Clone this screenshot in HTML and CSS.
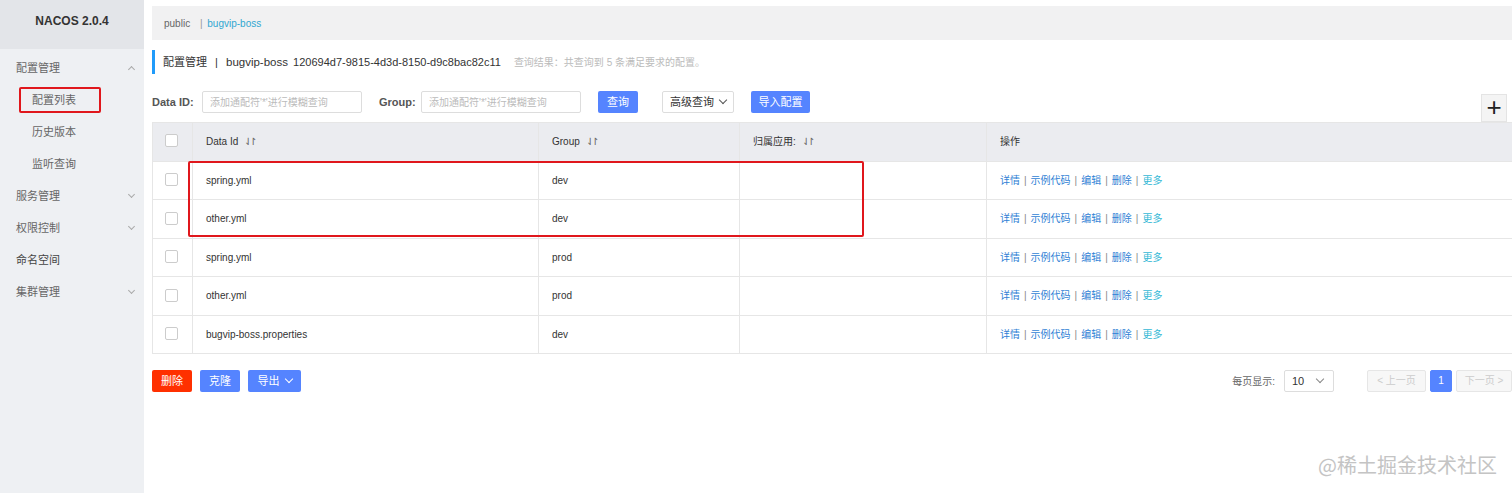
FILE: index.html
```html
<!DOCTYPE html>
<html>
<head lang="zh">
    <meta charset="UTF-8">
    <title>Nacos</title>
    <link rel="stylesheet" href="styles.css">
</head>
<body>
<div class="app">
    <div class="side">
        <div class="logo">NACOS 2.0.4</div>
        <ul class="menu">
            <li class="grp">配置管理<span class="arr up"></span></li>
            <li class="sub"><span class="mark">配置列表</span></li>
            <li class="sub">历史版本</li>
            <li class="sub">监听查询</li>
            <li class="grp">服务管理<span class="arr"></span></li>
            <li class="grp">权限控制<span class="arr"></span></li>
            <li class="grp dark">命名空间</li>
            <li class="grp">集群管理<span class="arr"></span></li>
        </ul>
    </div>
    <div class="main">
        <div class="ns">
            <span class="ns-item">public</span>
            <span class="ns-sep">|</span>
            <span class="ns-cur">bugvip-boss</span>
        </div>
        <div class="title">
            <span class="t-main">配置管理</span>
            <span class="t-sep">|</span>
            <span class="t-ns">bugvip-boss</span>
            <span class="t-id">120694d7-9815-4d3d-8150-d9c8bac82c11</span>
            <span class="t-res">查询结果：共查询到 5 条满足要求的配置。</span>
        </div>
        <div class="search">
            <label>Data ID:</label>
            <input class="ipt" placeholder="添加通配符'*'进行模糊查询">
            <label class="lb2">Group:</label>
            <input class="ipt" placeholder="添加通配符'*'进行模糊查询">
            <span class="btn blue b-query">查询</span>
            <span class="btn plain b-adv">高级查询 <i class="chev"></i></span>
            <span class="btn blue b-imp">导入配置</span>
            <span class="plus">+</span>
        </div>
        <div class="table">
            <div class="row head">
                <div class="c c0"><span class="cb"></span></div>
                <div class="c c1">Data Id <span class="sort">⇃↾</span></div>
                <div class="c c2">Group <span class="sort">⇃↾</span></div>
                <div class="c c3">归属应用: <span class="sort">⇃↾</span></div>
                <div class="c c4">操作</div>
            </div>
            <div class="row">
                <div class="c c0"><span class="cb"></span></div>
                <div class="c c1">spring.yml</div>
                <div class="c c2">dev</div>
                <div class="c c3"></div>
                <div class="c c4 ops"><a>详情</a><b>|</b><a>示例代码</a><b>|</b><a>编辑</a><b>|</b><a>删除</a><b>|</b><a class="more">更多</a></div>
            </div>
            <div class="row">
                <div class="c c0"><span class="cb"></span></div>
                <div class="c c1">other.yml</div>
                <div class="c c2">dev</div>
                <div class="c c3"></div>
                <div class="c c4 ops"><a>详情</a><b>|</b><a>示例代码</a><b>|</b><a>编辑</a><b>|</b><a>删除</a><b>|</b><a class="more">更多</a></div>
            </div>
            <div class="row">
                <div class="c c0"><span class="cb"></span></div>
                <div class="c c1">spring.yml</div>
                <div class="c c2">prod</div>
                <div class="c c3"></div>
                <div class="c c4 ops"><a>详情</a><b>|</b><a>示例代码</a><b>|</b><a>编辑</a><b>|</b><a>删除</a><b>|</b><a class="more">更多</a></div>
            </div>
            <div class="row">
                <div class="c c0"><span class="cb"></span></div>
                <div class="c c1">other.yml</div>
                <div class="c c2">prod</div>
                <div class="c c3"></div>
                <div class="c c4 ops"><a>详情</a><b>|</b><a>示例代码</a><b>|</b><a>编辑</a><b>|</b><a>删除</a><b>|</b><a class="more">更多</a></div>
            </div>
            <div class="row">
                <div class="c c0"><span class="cb"></span></div>
                <div class="c c1">bugvip-boss.properties</div>
                <div class="c c2">dev</div>
                <div class="c c3"></div>
                <div class="c c4 ops"><a>详情</a><b>|</b><a>示例代码</a><b>|</b><a>编辑</a><b>|</b><a>删除</a><b>|</b><a class="more">更多</a></div>
            </div>
            <div class="redbox"></div>
        </div>
        <div class="foot">
            <span class="btn red">删除</span>
            <span class="btn blue">克隆</span>
            <span class="btn blue b-exp">导出 <i class="chev w"></i></span>
            <div class="pager">
                <span class="ps-lb">每页显示:</span>
                <span class="sel">10 <i class="chev"></i></span>
                <span class="pg dis">&lt; 上一页</span>
                <span class="pg cur">1</span>
                <span class="pg dis">下一页 &gt;</span>
            </div>
        </div>
        <div class="wm">@稀土掘金技术社区</div>
    </div>
</div>
</body>
</html>
```

FILE: styles.css
```css
*{padding:0;margin:0;box-sizing:border-box;}
li{list-style:none;}
body{width:1512px;height:493px;overflow:hidden;font-family:"Liberation Sans","Noto Sans CJK SC",sans-serif;font-size:12px;color:#333;background:#fff;}
.app{display:flex;height:493px;}

.side{width:144px;background:#eef0f3;flex-shrink:0;}
.logo{height:49px;background:#e3e5e9;text-align:center;line-height:42px;font-weight:bold;font-size:12px;color:#333;}
.menu{padding-top:3px;}
.menu li{height:32px;line-height:32px;position:relative;color:#666;font-size:11px;}
.menu .grp{padding-left:16px;}
.menu .grp.dark{color:#444;}
.menu .sub{padding-left:32px;}
.mark{display:inline-block;line-height:22px;margin-left:-13px;padding:0 23px 0 11px;border:2px solid #e0171c;border-radius:2px;}
.arr{position:absolute;right:10px;top:12px;width:5px;height:5px;border-right:1px solid #aaa;border-bottom:1px solid #aaa;transform:rotate(45deg);}
.arr.up{top:15px;transform:rotate(-135deg);}

.main{flex:1;padding:6px 0 0 8px;position:relative;}
.ns{height:34px;background:#f1f1f2;line-height:36px;padding-left:12px;font-size:10px;color:#666;}
.ns-sep{margin:0 2px 0 7px;color:#999;}
.ns-cur{color:#31a7d1;}

.title{margin-top:10px;height:24px;line-height:24px;border-left:3px solid #209bfa;padding-left:8px;font-size:11px;color:#333;}
.t-sep{margin:0 5px;}
.t-ns{font-size:11.5px;}
.t-id{margin-left:2px;}
.t-res{margin-left:10px;font-size:10px;color:#bbb;}

.search{display:flex;align-items:center;margin-top:17px;height:22px;position:relative;}
.search label{font-weight:bold;font-size:11px;color:#555;width:50px;}
.search .lb2{margin-left:17px;width:42px;}
.ipt{width:160px;height:22px;border:1px solid #ddd;border-radius:2px;padding-left:7px;font-size:10px;font-family:inherit;}
.ipt::placeholder{color:#bbb;}
.btn{display:inline-block;height:22px;line-height:22px;padding:0 10px;border-radius:2px;font-size:11px;color:#fff;text-align:center;}
.blue{background:#5584ff;}
.red{background:#ff3000;}
.plain{border:1px solid #ddd;color:#333;line-height:20px;}
.b-query{margin-left:17px;width:40px;padding:0;}
.b-adv{margin-left:24px;width:72px;padding:0;}
.b-imp{margin-left:17px;width:59px;padding:0;}
.chev{display:inline-block;width:6px;height:6px;border-right:1px solid #555;border-bottom:1px solid #555;transform:rotate(45deg);margin:0 0 3px 3px;}
.chev.w{border-color:#fff;}
.plus{position:absolute;right:5px;top:3px;width:26px;height:28px;border:1px solid #e4e4e4;background:#f4f4f4;font-size:26px;line-height:24px;text-align:center;color:#222;font-weight:300;}

.table{margin-top:9px;border:1px solid #e6e6e6;border-right:0;position:relative;}
.row{display:flex;height:38.4px;border-top:1px solid #e6e6e6;font-size:10px;}
.row.head{height:38px;border-top:0;background:#ebecf0;color:#333;}
.c{border-left:1px solid #e6e6e6;line-height:37px;padding-left:13px;}
.c0{width:39px;border-left:0;padding-left:12px;}
.c1{width:346px;}
.c2{width:201px;}
.c3{width:247px;}
.c4{flex:1;}
.cb{display:inline-block;width:13px;height:13px;border:1px solid #ccc;border-radius:2px;background:#fff;vertical-align:middle;margin-top:-3px;}
.sort{font-size:10px;color:#666;margin-left:3px;letter-spacing:-3px;}
.ops a{color:#2f7fd5;}
.ops a.more{color:#35b9d6;}
.ops b{font-weight:normal;color:#888;margin:0 4px;}
.redbox{position:absolute;left:35px;top:38px;width:676px;height:76px;border:2px solid #e0171c;border-radius:2px;}

.foot{display:flex;align-items:center;margin-top:16px;height:22px;}
.foot .btn{margin-right:8px;width:40px;padding:0;}
.foot .b-exp{width:53px;}
.pager{margin-left:auto;display:flex;align-items:center;font-size:10px;color:#666;}
.ps-lb{margin-right:9px;}
.sel{width:50px;height:22px;border:1px solid #ddd;border-radius:2px;line-height:20px;padding-left:7px;color:#333;font-size:11px;margin-right:33px;position:relative;}
.sel .chev{position:absolute;right:10px;top:5px;border-color:#888;margin:0;}
.pg{height:22px;line-height:20px;border:1px solid #e6e6e6;border-radius:2px;padding:0 8px;margin-right:4px;}
.pg.dis{color:#ccc;background:#f7f7f7;width:59px;padding:0;text-align:center;}
.pg.cur{background:#5584ff;color:#fff;border-color:#5584ff;width:22px;padding:0;text-align:center;}
.pg:last-child{margin-right:0;width:56px;}

.wm{position:absolute;right:15px;bottom:14px;font-size:20px;color:#c4c4c4;font-family:"Noto Sans CJK SC",sans-serif;}
```
